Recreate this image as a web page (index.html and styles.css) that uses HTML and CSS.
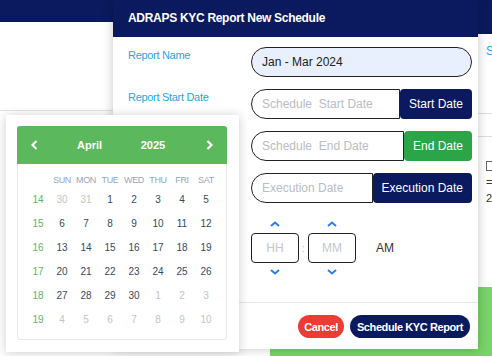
FILE: index.html
```html
<!DOCTYPE html>
<html lang="en">
<head>
    <meta charset="UTF-8">
    <meta name="viewport" content="width=device-width, initial-scale=1.0">
    <title>ADRAPS KYC Report New Schedule</title>
    <link rel="stylesheet" href="styles.css">
</head>
<body>
    <!-- page behind the dialog -->
    <div class="backdrop">
        <div class="topbar"><span class="crumb">Schedule</span></div>
        <div class="main">
            <div class="left-panel"><div class="left-head"></div></div>
            <div class="right-top">
                <div class="strip">
                    <div class="strip-head"></div>
                    <div class="strip-link">Sl</div>
                    <div class="strip-line first"></div>
                    <div class="strip-line"></div>
                    <div class="strip-box"></div>
                    <div class="strip-text">=</div>
                    <div class="strip-text small">2</div>
                </div>
            </div>
            <div class="green-card"></div>
        </div>
    </div>

    <!-- dialog -->
    <div class="modal">
        <div class="modal-head">ADRAPS KYC Report New Schedule</div>
        <div class="modal-body">
            <div class="row">
                <label>Report Name</label>
                <input class="field pill" type="text" value="Jan - Mar 2024">
            </div>
            <div class="row">
                <label>Report Start Date</label>
                <div class="group">
                    <input class="field" type="text" placeholder="Schedule  Start Date">
                    <button class="btn navy">Start Date</button>
                </div>
            </div>
            <div class="row">
                <label></label>
                <div class="group">
                    <input class="field" type="text" placeholder="Schedule  End Date">
                    <button class="btn green">End Date</button>
                </div>
            </div>
            <div class="row">
                <label></label>
                <div class="group">
                    <input class="field" type="text" placeholder="Execution Date">
                    <button class="btn navy">Execution Date</button>
                </div>
            </div>
            <div class="row">
                <label></label>
                <div class="time">
                    <div class="spin">
                        <span class="chev"><svg width="10" height="6" viewBox="0 0 10 6"><polyline points="1,5 5,1.5 9,5" /></svg></span>
                        <input class="tbox" type="text" placeholder="HH">
                        <span class="chev"><svg width="10" height="6" viewBox="0 0 10 6"><polyline points="1,1 5,4.5 9,1" /></svg></span>
                    </div>
                    <span class="colon">:</span>
                    <div class="spin">
                        <span class="chev"><svg width="10" height="6" viewBox="0 0 10 6"><polyline points="1,5 5,1.5 9,5" /></svg></span>
                        <input class="tbox" type="text" placeholder="MM">
                        <span class="chev"><svg width="10" height="6" viewBox="0 0 10 6"><polyline points="1,1 5,4.5 9,1" /></svg></span>
                    </div>
                    <span class="meridian">AM</span>
                </div>
            </div>
        </div>
        <div class="modal-foot">
            <button class="pill-btn cancel">Cancel</button>
            <button class="pill-btn submit">Schedule KYC Report</button>
        </div>
    </div>

    <!-- date picker popup -->
    <div class="cal">
        <div class="cal-box">
            <div class="cal-head">
                <span class="nav"><svg width="7" height="10" viewBox="0 0 7 10"><polyline points="5.5,1 1.5,5 5.5,9" /></svg></span>
                <span class="month">April</span>
                <span class="year">2025</span>
                <span class="nav next"><svg width="7" height="10" viewBox="0 0 7 10"><polyline points="1.5,1 5.5,5 1.5,9" /></svg></span>
            </div>
            <div class="cal-grid">
                <span></span><span class="dow">SUN</span><span class="dow">MON</span><span class="dow">TUE</span><span class="dow">WED</span><span class="dow">THU</span><span class="dow">FRI</span><span class="dow">SAT</span>

                <span class="wk">14</span><span class="off">30</span><span class="off">31</span><span>1</span><span>2</span><span>3</span><span>4</span><span>5</span>
                <span class="wk">15</span><span>6</span><span>7</span><span>8</span><span>9</span><span>10</span><span>11</span><span>12</span>
                <span class="wk">16</span><span>13</span><span>14</span><span>15</span><span>16</span><span>17</span><span>18</span><span>19</span>
                <span class="wk">17</span><span>20</span><span>21</span><span>22</span><span>23</span><span>24</span><span>25</span><span>26</span>
                <span class="wk">18</span><span>27</span><span>28</span><span>29</span><span>30</span><span class="off">1</span><span class="off">2</span><span class="off">3</span>
                <span class="wk">19</span><span class="off">4</span><span class="off">5</span><span class="off">6</span><span class="off">7</span><span class="off">8</span><span class="off">9</span><span class="off">10</span>
            </div>
        </div>
    </div>
</body>
</html>
```

FILE: styles.css
```css
/* base */
* {
    box-sizing: border-box;
}

body {
    margin: 0;
    width: 492px;
    height: 356px;
    overflow: hidden;
    position: relative;
    background: #fff;
    font-family: "Liberation Sans", Arial, sans-serif;
}

/* page behind the dialog */
.backdrop {
    display: flex;
    flex-direction: column;
    height: 356px;
}

.topbar {
    height: 22px;
    background: #0b1a5e;
    overflow: hidden;
}

.crumb {
    display: inline-block;
    margin-left: -50px;
    color: #fff;
    font-size: 11px;
    font-weight: bold;
    line-height: 14px;
}

.main {
    flex: 1;
    display: grid;
    grid-template-columns: 270px 1fr;
    grid-template-rows: 265px 1fr;
}

.left-panel {
    grid-row: 1 / 3;
}

.left-head {
    height: 89px;
    border-bottom: 1px solid #e3e3e3;
}

.right-top {
    padding-left: 208px;
}

.strip {
    padding-left: 8px;
}

.strip-head {
    height: 12px;
    margin-left: -8px;
    background: #0b1a5e;
}

.strip-link {
    margin-top: 10px;
    color: #2aa6d6;
    font-size: 12px;
    line-height: 14px;
}

.strip-line {
    height: 1px;
    margin: 22px 0 0 -8px;
    background: #ddd;
}

.strip-line.first {
    margin-top: 55px;
}

.strip-box {
    width: 10px;
    height: 10px;
    margin-top: 24px;
    border: 1px solid #666;
}

.strip-text {
    margin-top: 5px;
    color: #333;
    font-size: 11px;
    line-height: 12px;
}

.strip-text.small {
    margin-top: 4px;
}

.green-card {
    background: #78d368;
}

/* dialog */
.modal {
    position: absolute;
    left: 113px;
    top: 0;
    width: 365px;
    height: 349px;
    background: #fff;
    box-shadow: 0 0 10px rgba(0, 0, 0, 0.22);
    display: flex;
    flex-direction: column;
}

.modal-head {
    height: 37px;
    padding-left: 15px;
    background: #0b1a5e;
    color: #fff;
    font-size: 12px;
    font-weight: bold;
    letter-spacing: -0.3px;
    line-height: 37px;
}

.modal-body {
    padding: 10px 6px 21px 15px;
    display: flex;
    flex-direction: column;
    gap: 12px;
}

.row {
    display: grid;
    grid-template-columns: 123px minmax(0, 1fr);
    align-items: start;
}

.row label {
    padding-top: 1px;
    color: #27a6df;
    font-size: 11px;
    letter-spacing: -0.3px;
    line-height: 14px;
}

.field {
    height: 30px;
    margin: 0;
    padding: 0 10px;
    border: 1px solid #222;
    border-radius: 15px 0 0 15px;
    background: #fff;
    color: #222;
    font-family: inherit;
    font-size: 12px;
    outline: none;
}

.field::placeholder {
    color: #b9bdc4;
    white-space: pre;
}

.field.pill {
    width: 100%;
    border-radius: 15px;
    background: #e8f0fe;
}

.group {
    display: flex;
    min-width: 0;
}

.group .field {
    flex: 1;
    width: 0;
    min-width: 0;
}

.btn {
    flex: none;
    height: 30px;
    padding: 0 9px;
    border: none;
    border-radius: 4px;
    color: #fff;
    font-family: inherit;
    font-size: 12px;
    white-space: nowrap;
}

.btn.navy {
    background: #0b1a5e;
}

.btn.green {
    background: #2aa548;
}

/* time picker */
.time {
    display: flex;
    align-items: center;
}

.spin {
    display: flex;
    flex-direction: column;
    align-items: center;
}

.chev {
    height: 18px;
    display: flex;
    align-items: center;
}

.chev polyline {
    fill: none;
    stroke: #2b7ee6;
    stroke-width: 2;
}

.tbox {
    width: 48px;
    height: 30px;
    margin: 0;
    border: 1px solid #222;
    border-radius: 4px;
    text-align: center;
    font-family: inherit;
    font-size: 12px;
    outline: none;
}

.tbox::placeholder {
    color: #c4c7cc;
}

.colon {
    width: 9px;
    text-align: center;
    color: #bbb;
    font-size: 10px;
}

.meridian {
    margin-left: 20px;
    color: #333;
    font-size: 12px;
}

/* footer */
.modal-foot {
    display: flex;
    justify-content: flex-end;
    gap: 6px;
    padding: 12px 8px 0 0;
    border-top: 1px solid #e6e6e6;
}

.pill-btn {
    height: 23px;
    padding: 0 6px;
    border: none;
    border-radius: 12px;
    color: #fff;
    font-family: inherit;
    font-size: 11px;
    font-weight: bold;
    letter-spacing: -0.4px;
    white-space: nowrap;
}

.pill-btn.cancel {
    background: #ee3b34;
}

.pill-btn.submit {
    padding: 0 7px;
    background: #0b1a5e;
}

/* date picker */
.cal {
    position: absolute;
    left: 6px;
    top: 115px;
    width: 233px;
    height: 237px;
    padding: 11px 12px 12px 11px;
    background: #fff;
    box-shadow: 0 1px 10px rgba(0, 0, 0, 0.2);
}

.cal-box {
    height: 214px;
    border: 1px solid #e5e8ec;
    border-radius: 3px;
}

.cal-head {
    height: 38px;
    margin: -1px -1px 0;
    border-radius: 3px 3px 0 0;
    background: #5cb85c;
    color: #fff;
    font-size: 11px;
    font-weight: bold;
    display: grid;
    grid-template-columns: 35px 75px 52px 1fr;
    align-items: center;
    text-align: center;
}

.nav {
    display: flex;
    justify-content: center;
}

.nav.next {
    padding-left: 12px;
}

.nav polyline {
    fill: none;
    stroke: #fff;
    stroke-width: 2.2;
}

.cal-grid {
    display: grid;
    grid-template-columns: repeat(8, 24px);
    grid-template-rows: 14px;
    grid-auto-rows: 24px;
    padding: 9px 0 0 8px;
    color: #34495e;
    font-size: 10px;
    align-items: center;
    justify-items: center;
}

.dow {
    color: #97a5bb;
    font-size: 9px;
    letter-spacing: -0.3px;
}

.wk {
    color: #5cb85c;
}

.off {
    color: #c2c5c9;
}
```
